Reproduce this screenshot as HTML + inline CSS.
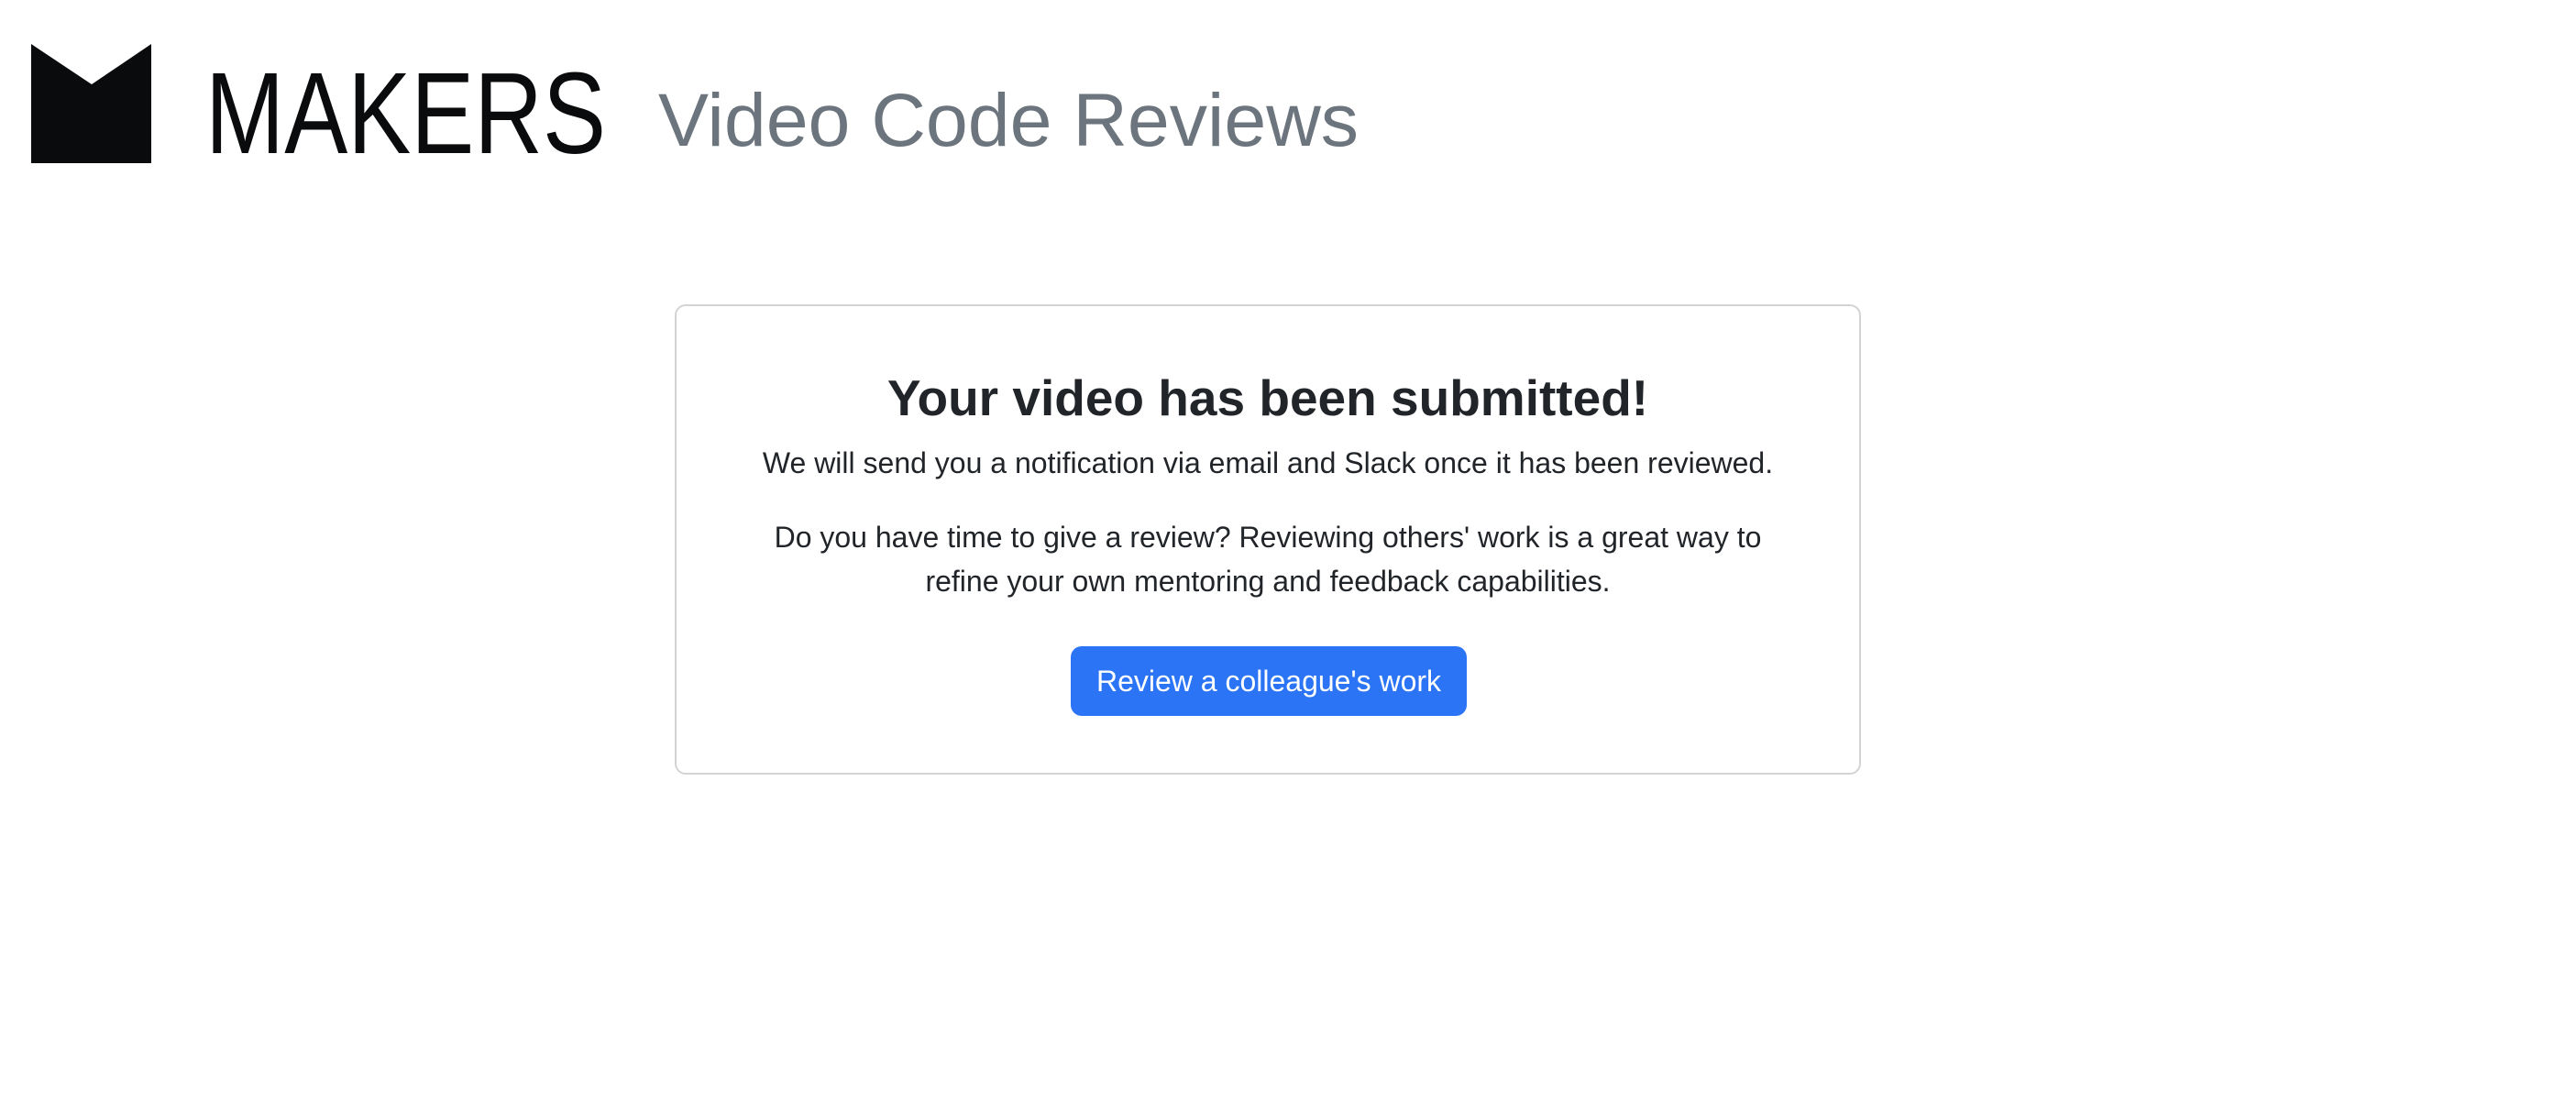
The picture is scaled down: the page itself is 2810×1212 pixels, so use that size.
<!DOCTYPE html>
<html><head><meta charset="utf-8"><style>
html,body{margin:0;padding:0;background:#fff;width:2810px;height:1212px;overflow:hidden;font-family:"Liberation Sans",Arial,sans-serif;}
.card{position:absolute;left:736px;top:332px;width:1290px;height:509px;border:2px solid #d3d3d3;border-radius:12px;}
.t{position:absolute;left:0;width:2766px;text-align:center;color:#212529;white-space:nowrap;}
h1{margin:0;font-size:55px;font-weight:bold;}
.btn{position:absolute;left:1168px;top:705px;width:432px;height:76px;background:#2b74f5;border-radius:12px;color:#fff;font-size:32px;line-height:76px;text-align:center;}
</style></head><body>
<svg width="1500" height="200" style="position:absolute;left:0;top:0">
<polygon points="34,48 100,92 165,48 165,178 34,178" fill="#0a0b0c"/>
<text x="224" y="167" font-family="Liberation Sans, sans-serif" font-size="126" fill="#0a0b0c" textLength="437" lengthAdjust="spacingAndGlyphs">MAKERS</text>
<text x="718" y="159" font-family="Liberation Sans, sans-serif" font-size="82" fill="#6c757d" textLength="764" lengthAdjust="spacingAndGlyphs">Video Code Reviews</text>
</svg>
<div class="card"></div>
<div class="t" style="top:402px"><h1>Your video has been submitted!</h1></div>
<div class="t" style="top:481px;font-size:32px;line-height:48px">We will send you a notification via email and Slack once it has been reviewed.</div>
<div class="t" style="top:562px;font-size:32px;line-height:48px">Do you have time to give a review? Reviewing others' work is a great way to<br>refine your own mentoring and feedback capabilities.</div>
<div class="btn">Review a colleague's work</div>
</body></html>
